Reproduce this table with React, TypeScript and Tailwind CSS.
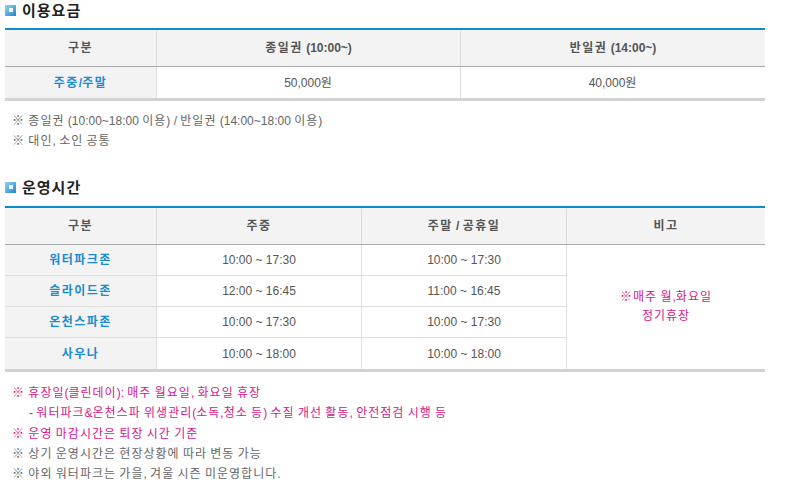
import React from "react";

const font = { fontFamily: '"Liberation Sans", "Noto Sans CJK KR", sans-serif' };

function K({ t, bold }: { t: string; bold?: boolean }) {
  const parts = t.split(/([\uAC00-\uD7A3\u3131-\u318E\u203B]+)/);
  return (
    <span className="whitespace-pre">
      {parts.map((p, i) =>
        i % 2 === 1 ? (
          <span key={i} className={bold ? "tracking-[1.5px]" : "tracking-[1px]"}>
            {p}
          </span>
        ) : (
          <React.Fragment key={i}>{p}</React.Fragment>
        )
      )}
    </span>
  );
}

function Title({ text }: { text: string }) {
  return (
    <div className="flex h-[20px] items-center">
      <span className="relative block h-[11px] w-[11px] bg-gradient-to-br from-[#8fd3f4] to-[#1488cf]">
        <span className="absolute left-[3.5px] top-[3.5px] block h-[4px] w-[4px] bg-white" />
      </span>
      <span className="ml-[6px] text-[15px] font-bold leading-none tracking-[1px] text-[#222]">{text}</span>
    </div>
  );
}

const headCell = "flex items-center justify-center bg-[#f3f3f3] text-[12px] font-bold text-[#555]";
const nameCell = "flex items-center justify-center bg-[#f3f3f3] text-[12px] font-bold text-[#1a8bd2]";
const dataCell = "flex items-center justify-center bg-white text-[12px] text-[#555]";

export default function App() {
  const rows = [
    ["워터파크존", "10:00 ~ 17:30", "10:00 ~ 17:30"],
    ["슬라이드존", "12:00 ~ 16:45", "11:00 ~ 16:45"],
    ["온천스파존", "10:00 ~ 17:30", "10:00 ~ 17:30"],
    ["사우나", "10:00 ~ 18:00", "10:00 ~ 18:00"],
  ];
  return (
    <div className="w-[786px] bg-white pl-[5px]" style={font}>
      <div className="w-[760px]">
        <Title text="이용요금" />
        <div className="mt-[8px] border-t-2 border-b-[3px] border-t-[#0a8ccf] border-b-[#d2d2d2]">
          <div className="grid h-[37px] grid-cols-[152px_304px_1fr] border-b border-[#aaa]">
            <div className={headCell + " border-r border-[#ddd]"}><K t="구분" bold /></div>
            <div className={headCell + " border-r border-[#ddd]"}><K t="종일권 (10:00~)" bold /></div>
            <div className={headCell}><K t="반일권 (14:00~)" bold /></div>
          </div>
          <div className="grid h-[31px] grid-cols-[152px_304px_1fr]">
            <div className={nameCell + " border-r border-[#ddd]"}><K t="주중/주말" bold /></div>
            <div className={dataCell + " border-r border-[#ddd]"}><K t="50,000원" /></div>
            <div className={dataCell}><K t="40,000원" /></div>
          </div>
        </div>
        <div className="mt-[10px] pl-[7px] text-[12px] leading-[20px] text-[#666]">
          <div><K t="※ 종일권 (10:00~18:00 이용) / 반일권 (14:00~18:00 이용)" /></div>
          <div><K t="※ 대인, 소인 공통" /></div>
        </div>

        <div className="mt-[26px]">
          <Title text="운영시간" />
        </div>
        <div className="mt-[9px] border-t-2 border-b-[3px] border-t-[#0a8ccf] border-b-[#d2d2d2]">
          <div className="grid h-[37px] grid-cols-[152px_205px_205px_1fr] border-b border-[#aaa]">
            <div className={headCell + " border-r border-[#ddd]"}><K t="구분" bold /></div>
            <div className={headCell + " border-r border-[#ddd]"}><K t="주중" bold /></div>
            <div className={headCell + " border-r border-[#ddd]"}><K t="주말 / 공휴일" bold /></div>
            <div className={headCell}><K t="비고" bold /></div>
          </div>
          <div className="grid grid-cols-[152px_205px_205px_1fr]">
            <div className="col-span-3">
              {rows.map((r, i) => (
                <div
                  key={i}
                  className={
                    "grid h-[31px] grid-cols-[152px_205px_205px] " +
                    (i < rows.length - 1 ? "border-b border-[#ddd]" : "")
                  }
                >
                  <div className={nameCell + " border-r border-[#ddd]"}><K t={r[0]} bold /></div>
                  <div className={dataCell + " border-r border-[#ddd]"}>{r[1]}</div>
                  <div className={dataCell + " border-r border-[#ddd]"}>{r[2]}</div>
                </div>
              ))}
            </div>
            <div className="flex flex-col items-center justify-center bg-white text-[12px] leading-[19px] text-[#d6168b]">
              <div><K t="※매주 월,화요일" /></div>
              <div><K t="정기휴장" /></div>
            </div>
          </div>
        </div>
        <div className="mt-[11px] pl-[7px] text-[12px] leading-[20.25px] text-[#666]">
          <div className="text-[#d6168b]"><K t="※ 휴장일(클린데이): 매주 월요일, 화요일 휴장" /></div>
          <div className="pl-[17px] text-[#d6168b]"><K t="- 워터파크&온천스파 위생관리(소독,청소 등) 수질 개선 활동, 안전점검 시행 등" /></div>
          <div className="text-[#d6168b]"><K t="※ 운영 마감시간은 퇴장 시간 기준" /></div>
          <div><K t="※ 상기 운영시간은 현장상황에 따라 변동 가능" /></div>
          <div><K t="※ 야외 워터파크는 가을, 겨울 시즌 미운영합니다." /></div>
        </div>
      </div>
    </div>
  );
}
